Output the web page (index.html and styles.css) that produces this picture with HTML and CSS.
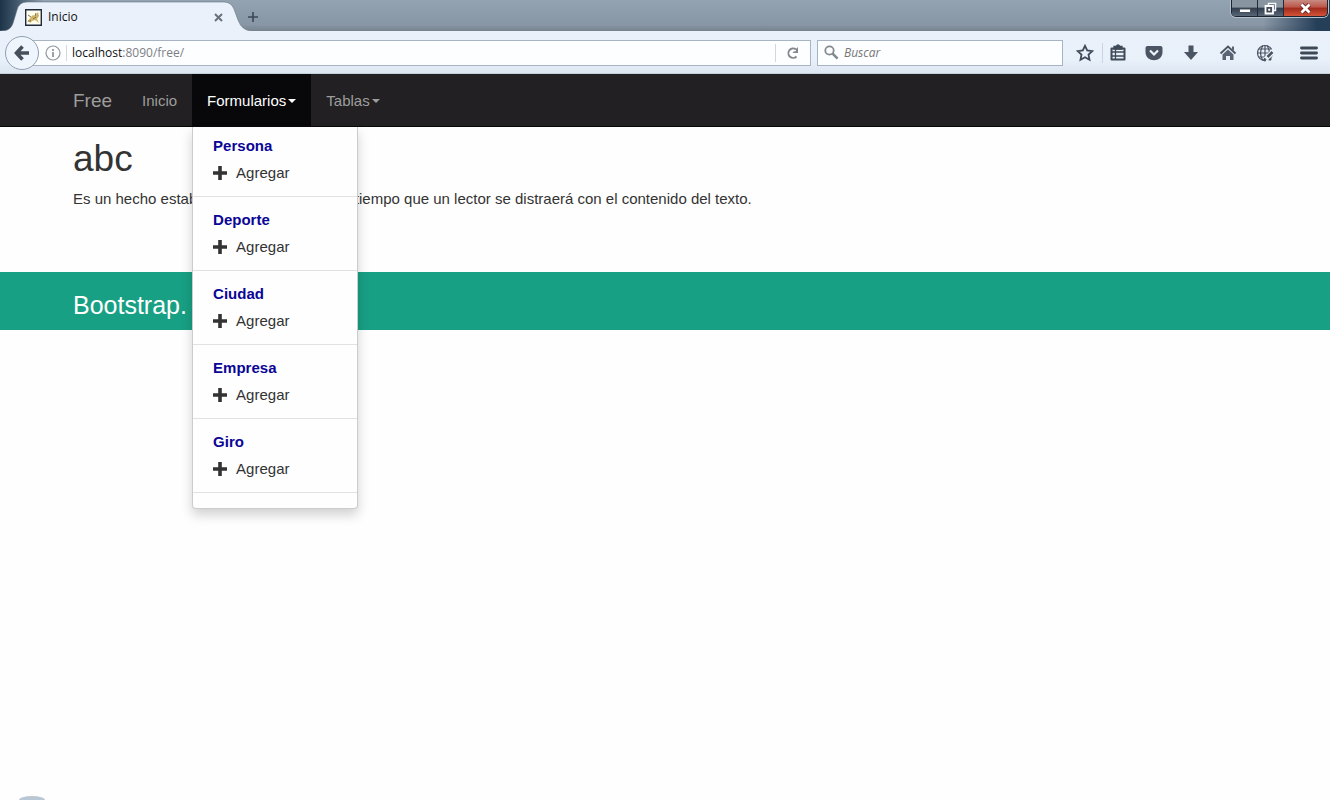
FILE: index.html
```html
<!DOCTYPE html>
<html lang="es">
<head>
<meta charset="utf-8">
<title>Inicio</title>
<link rel="stylesheet" href="styles.css">
</head>
<body>
<header class="browser">
  <div class="tabstrip">
    <div class="tab">
      <svg class="tab-shape" viewBox="0 0 252 31" aria-hidden="true"><path d="M0 31C9 31 12 28 14 20L17 10Q19 2 27 2H224Q231 2 234 9L238 20Q242 31 252 31Z" fill="#eaf1fb"/><path d="M0 31C9 31 12 28 14 20L17 10Q19 2 27 2H224Q231 2 234 9L238 20Q242 31 252 31" fill="none" stroke="#5d6b7b" stroke-opacity=".55"/></svg>
      <svg class="favicon" viewBox="0 0 17 17" aria-hidden="true"><path d="M.7.7h15.6v15.6H.7z" fill="#fffdf0" stroke="#222b38" stroke-width="1.4"/><path d="M2 13l4-5 2-2 2 1 3-4 1 4-2 3 2 4-4-3-3 1-2 2-1-2z" fill="#cfb362"/><path d="M3 6l3 2M8 10l3-2M11 4l-1 3M3 12h3" stroke="#7d7055"/></svg>
      <span class="tab-title">Inicio</span>
      <button class="tab-close" aria-label="Cerrar"><svg width="9" height="9" viewBox="0 0 9 9"><path d="M1 1l7 7M8 1L1 8" stroke="#69727c" stroke-width="2"/></svg></button>
    </div>
    <button class="new-tab" aria-label="Nueva pestaña"><svg width="12" height="12" viewBox="0 0 12 12"><path d="M6 1v10M1 6h10" stroke="#3c4857" stroke-width="1.6"/></svg></button>
    <div class="window-buttons">
      <button class="win win-min" aria-label="Minimizar"><svg width="14" height="7" viewBox="0 0 14 7"><path d="M1.500 2h11v3.500h-11z" fill="#fff" stroke="#48515c"/></svg></button>
      <button class="win win-max" aria-label="Restaurar"><svg width="14" height="13" viewBox="0 0 14 13"><path d="M4.500 1.500h7v7h-7z" fill="#56616d" stroke="#f4f7fa" stroke-width="1.500"/><path d="M1.500 4h7.500v7.500H1.500z" fill="#434c58" stroke="#fff" stroke-width="1.800"/><path d="M4.200 6.700h2v2h-2z" fill="#fff"/></svg></button>
      <button class="win win-close" aria-label="Cerrar ventana"><svg width="13" height="11" viewBox="0 0 13 11"><path d="M2.500 1.500l8 8M10.500 1.500l-8 8" stroke="#6b2020" stroke-width="4.500"/><path d="M2.500 1.500l8 8M10.500 1.500l-8 8" stroke="#fff" stroke-width="2.800"/></svg></button>
    </div>
  </div>
  <div class="toolbar">
    <button class="back" aria-label="Atrás"><svg width="16" height="16" viewBox="0 0 16 16"><path d="M8.500 1.500L2.500 8l6 6.500M3 8h12" fill="none" stroke="#46505c" stroke-width="3.600"/></svg></button>
    <div class="urlbar">
      <svg class="info" viewBox="0 0 16 16" aria-hidden="true"><circle cx="8" cy="8" r="7" fill="none" stroke="#92979d" stroke-width="1.200"/><path d="M8 4v2M8 7v5" stroke="#858b92" stroke-width="1.600"/></svg>
      <a class="url" href="#"><b>localhost</b>:8090/free/</a>
      <button class="reload" aria-label="Recargar"><svg width="14" height="14" viewBox="0 0 14 14"><path d="M10.500 10.500A4.700 4.700 0 1 1 10 3.500" fill="none" stroke="#83888d" stroke-width="1.900"/><path d="M12 1v6H6.500L8 5.300h2V3z" fill="#83888d"/></svg></button>
    </div>
    <label class="search"><svg width="15" height="15" viewBox="0 0 15 15" aria-hidden="true"><circle cx="5.500" cy="5.500" r="4.200" fill="none" stroke="#85898e" stroke-width="1.800"/><path d="M8.600 8.600l5 5" stroke="#85898e" stroke-width="2.600"/></svg><input type="text" placeholder="Buscar" aria-label="Buscar"></label>
    <div class="tools">
      <button class="tool star" aria-label="Marcador"><svg viewBox="0 0 18 18"><path d="M9 1.800l2.200 4.700 5.100.6-3.800 3.500 1 5.100L9 13.200l-4.500 2.500 1-5.100L1.700 7.100l5.100-.6z" fill="none" stroke="#3f4a59" stroke-width="1.800"/></svg></button>
      <button class="tool list" aria-label="Lista"><svg viewBox="0 0 18 18"><path d="M2.500 4.500h13v11h-13z" fill="none" stroke="#3f4a59" stroke-width="2" stroke-linejoin="round"/><path d="M5 4V2.500h2Q9-.5 11 2.500h2V5H5zM3 8h12M3 12h12M6.500 5v10" fill="#3f4a59" stroke="#3f4a59" stroke-width="1.300"/></svg></button>
      <button class="tool" aria-label="Pocket"><svg viewBox="0 0 18 18"><path d="M2.500 2h13Q17.500 2 17.500 4v4c0 11-17 11-17 0V4q0-2 2-2z" fill="#4a5462"/><path d="M5 6.500l4 4 4-4" fill="none" stroke="#eef4fb" stroke-width="2.200"/></svg></button>
      <button class="tool" aria-label="Descargas"><svg viewBox="0 0 18 18"><path d="M6.500 1.500h5V8H16l-7 8-7-8h4.500z" fill="#4a5462"/></svg></button>
      <button class="tool" aria-label="Inicio"><svg viewBox="0 0 18 18"><path d="M1.500 9.500L9 2.500l7.500 7" fill="none" stroke="#4a5462" stroke-width="1.800"/><path d="M13 2.500h2v4h-2zM9 5.500l5.500 5V16H11v-4H7v4H3.500v-5.500z" fill="#5a6472"/></svg></button>
      <button class="tool" aria-label="Web"><svg viewBox="0 0 18 18"><g fill="none" stroke="#4a5462" stroke-width="1.200"><circle cx="9" cy="9" r="7.500"/><path d="M9 1v16M1 9h16M2.500 5h13M2.500 13h13M7 1.500q-5 7.500 0 15M11 1.500q5 7.500 0 15"/></g><path d="M18 6.500L9 16" stroke="#eef4fb" stroke-width="5"/><path d="M16.500 8l-5 5M9.500 14.500L8 17M13.500 14.500l1.500 1.500" stroke="#4a5462" stroke-width="2.600"/></svg></button>
      <button class="tool menu-button" aria-label="Menú"><svg viewBox="0 0 18 18"><path d="M1.500 4h15M1.500 9h15M1.500 14h15" stroke="#3d4856" stroke-width="2.900" stroke-linecap="round"/></svg></button>
    </div>
  </div>
</header>

<nav class="navbar">
  <a class="brand" href="#">Free</a>
  <a class="nav-link" href="#">Inicio</a>
  <div class="dropdown">
    <a class="nav-link active" href="#" aria-expanded="true">Formularios<span class="caret"></span></a>
    <ul class="dropdown-menu">
      <li class="group"><strong>Persona</strong><a href="#"><svg class="plus" viewBox="0 0 14 14"><path d="M7 0v14M0 7h14" stroke="#333" stroke-width="3.600"/></svg>Agregar</a></li>
      <li class="group"><strong>Deporte</strong><a href="#"><svg class="plus" viewBox="0 0 14 14"><path d="M7 0v14M0 7h14" stroke="#333" stroke-width="3.600"/></svg>Agregar</a></li>
      <li class="group"><strong>Ciudad</strong><a href="#"><svg class="plus" viewBox="0 0 14 14"><path d="M7 0v14M0 7h14" stroke="#333" stroke-width="3.600"/></svg>Agregar</a></li>
      <li class="group"><strong>Empresa</strong><a href="#"><svg class="plus" viewBox="0 0 14 14"><path d="M7 0v14M0 7h14" stroke="#333" stroke-width="3.600"/></svg>Agregar</a></li>
      <li class="group"><strong>Giro</strong><a href="#"><svg class="plus" viewBox="0 0 14 14"><path d="M7 0v14M0 7h14" stroke="#333" stroke-width="3.600"/></svg>Agregar</a></li>
    </ul>
  </div>
  <a class="nav-link" href="#">Tablas<span class="caret"></span></a>
</nav>

<main class="content">
  <h1>abc</h1>
  <p>Es un hecho establecido hace demasiado tiempo que un lector se distraerá con el contenido del texto.</p>
</main>
<footer class="footer">Bootstrap.</footer>
<div class="orb"></div>
</body>
</html>
```
FILE: styles.css
```css
* { box-sizing: border-box; }
html { height: 100%; }
body {
  margin: 0;
  min-height: 100%;
  display: flex;
  flex-direction: column;
  background: #fefefe;
  color: #333;
  font: 15px/20px "Liberation Sans", Arial, sans-serif;
  overflow: hidden;
}
button { margin: 0; padding: 0; border: 0; background: none; display: flex; align-items: center; justify-content: center; }
a { color: inherit; text-decoration: none; }
svg { flex: none; display: block; }

.browser { font: 12px/16px "Open Sans", sans-serif; color: #111; }
.tabstrip {
  height: 31px;
  display: flex;
  align-items: center;
  background:
    linear-gradient(90deg, #1d3348 0, #40566a 16px, transparent 44px),
    linear-gradient(90deg, transparent 95%, #263f59 99%),
    linear-gradient(180deg, #93a3b1, #8896a5 80%, #76838f);
}
.tab { position: relative; width: 240px; height: 31px; display: flex; align-items: center; padding: 3px 16px 0 25px; }
.tab-shape { position: absolute; left: 0; top: 0; width: 252px; height: 31px; }
.favicon { position: relative; width: 17px; height: 17px; margin-right: 6px; }
.tab-title { position: relative; flex: 1; }
.tab-close { position: relative; width: 12px; height: 12px; }
.new-tab { width: 26px; height: 26px; margin-top: 3px; position: relative; }
.window-buttons {
  display: flex;
  align-self: flex-start;
  height: 17px;
  margin: 0 2px 0 auto;
  border: 1px solid #1b2431;
  border-top: 0;
  border-radius: 0 0 5px 5px;
  overflow: hidden;
  box-shadow: 0 0 0 1px #b4c0cc;
}
.win { width: 26px; background: linear-gradient(#8894a0 0 45%, #303c4b 50%, #596676); border-right: 1px solid #222c38; }
.win-min { padding-top: 4px; }
.win-close { width: 43px; border: 0; background: linear-gradient(#c78b82 0, #bd5549 45%, #a02a1c 50%, #d35338); }

.toolbar {
  height: 43px;
  display: flex;
  align-items: center;
  padding: 1px 3px 0 5px;
  background: linear-gradient(#eaf1fb, #e8f0fa 70%, #dce6f1);
  border-bottom: 1px solid #c3cfdb;
}
.back { position: relative; width: 34px; height: 34px; border: 1px solid #8fa0b2; border-radius: 50%; background: #eff5fc; flex: none; }
.urlbar { flex: 1; height: 26px; margin-left: -6px; padding-left: 11px; display: flex; align-items: center; background: #fdfeff; border: 1px solid #a8b4c2; }
.info { width: 16px; height: 16px; margin-right: 5px; }
.url { flex: 1; color: #7d8083; border-left: 1px solid #d5d8db; padding-left: 5px; }
.url b { font-weight: 400; color: #111; }
.reload { width: 35px; height: 18px; border-left: 1px solid #d5d8db; }
.search { width: 246px; height: 26px; margin-left: 6px; padding-left: 6px; display: flex; align-items: center; gap: 5px; background: #fdfeff; border: 1px solid #a8b4c2; }
.search input { flex: 1; min-width: 0; border: 0; padding: 0; outline: 0; background: none; font: italic 12px/16px "Open Sans", sans-serif; }
.search input::placeholder { color: #777; opacity: 1; }
.tools { display: flex; margin-left: 4px; }
.tool { width: 37px; height: 26px; }
.tool svg { width: 18px; height: 18px; }
.star { width: 35px; }
.list { width: 33px; padding-right: 3px; border-left: 1px solid #ccd5df; height: 20px; align-self: center; }
.menu-button { margin-left: 7px; }

.navbar { height: 53px; display: flex; padding-left: 73px; background: #222022; border-bottom: 1px solid #090809; color: #9d9d9d; }
.brand { font-size: 19px; line-height: 53px; margin-right: 15px; }
.nav-link { display: flex; align-items: center; height: 53px; padding: 0 15px; }
.active { background: #080709; color: #fff; }
.caret { margin-left: 2px; border: 4px solid transparent; border-top-color: currentColor; border-bottom: 0; }
.dropdown { position: relative; }
.dropdown-menu {
  position: absolute;
  top: 53px;
  left: 0;
  width: 166px;
  margin: 0;
  padding: 5px 0 15px;
  list-style: none;
  color: #333;
  background: #fefefe;
  border: 1px solid #ccc;
  border-top: 0;
  border-radius: 0 0 4px 4px;
  box-shadow: 0 6px 12px rgba(0, 0, 0, .18);
}
.group { border-bottom: 1px solid #e2e2e2; padding: 0 20px 10px; margin-bottom: 9px; }
.group:last-child { margin-bottom: 0; }
.group strong { display: block; line-height: 28px; color: #0a0596; }
.group a { display: flex; align-items: center; gap: 9px; line-height: 26px; }
.plus { width: 14px; height: 14px; }

.content { padding: 10px 73px 0; height: 145px; }
.content h1 { margin: 0 0 9px; font-size: 37px; font-weight: 400; line-height: 43px; }
.content p { margin: 0; }
.footer { height: 58px; padding: 8px 73px 0; background: #18a084; color: #fff; font-size: 25px; line-height: 50px; }
.orb { width: 26px; height: 4px; margin: auto 0 0 19px; border-radius: 13px 13px 0 0 / 4px 4px 0 0; background: #b8c7d3; }
```
